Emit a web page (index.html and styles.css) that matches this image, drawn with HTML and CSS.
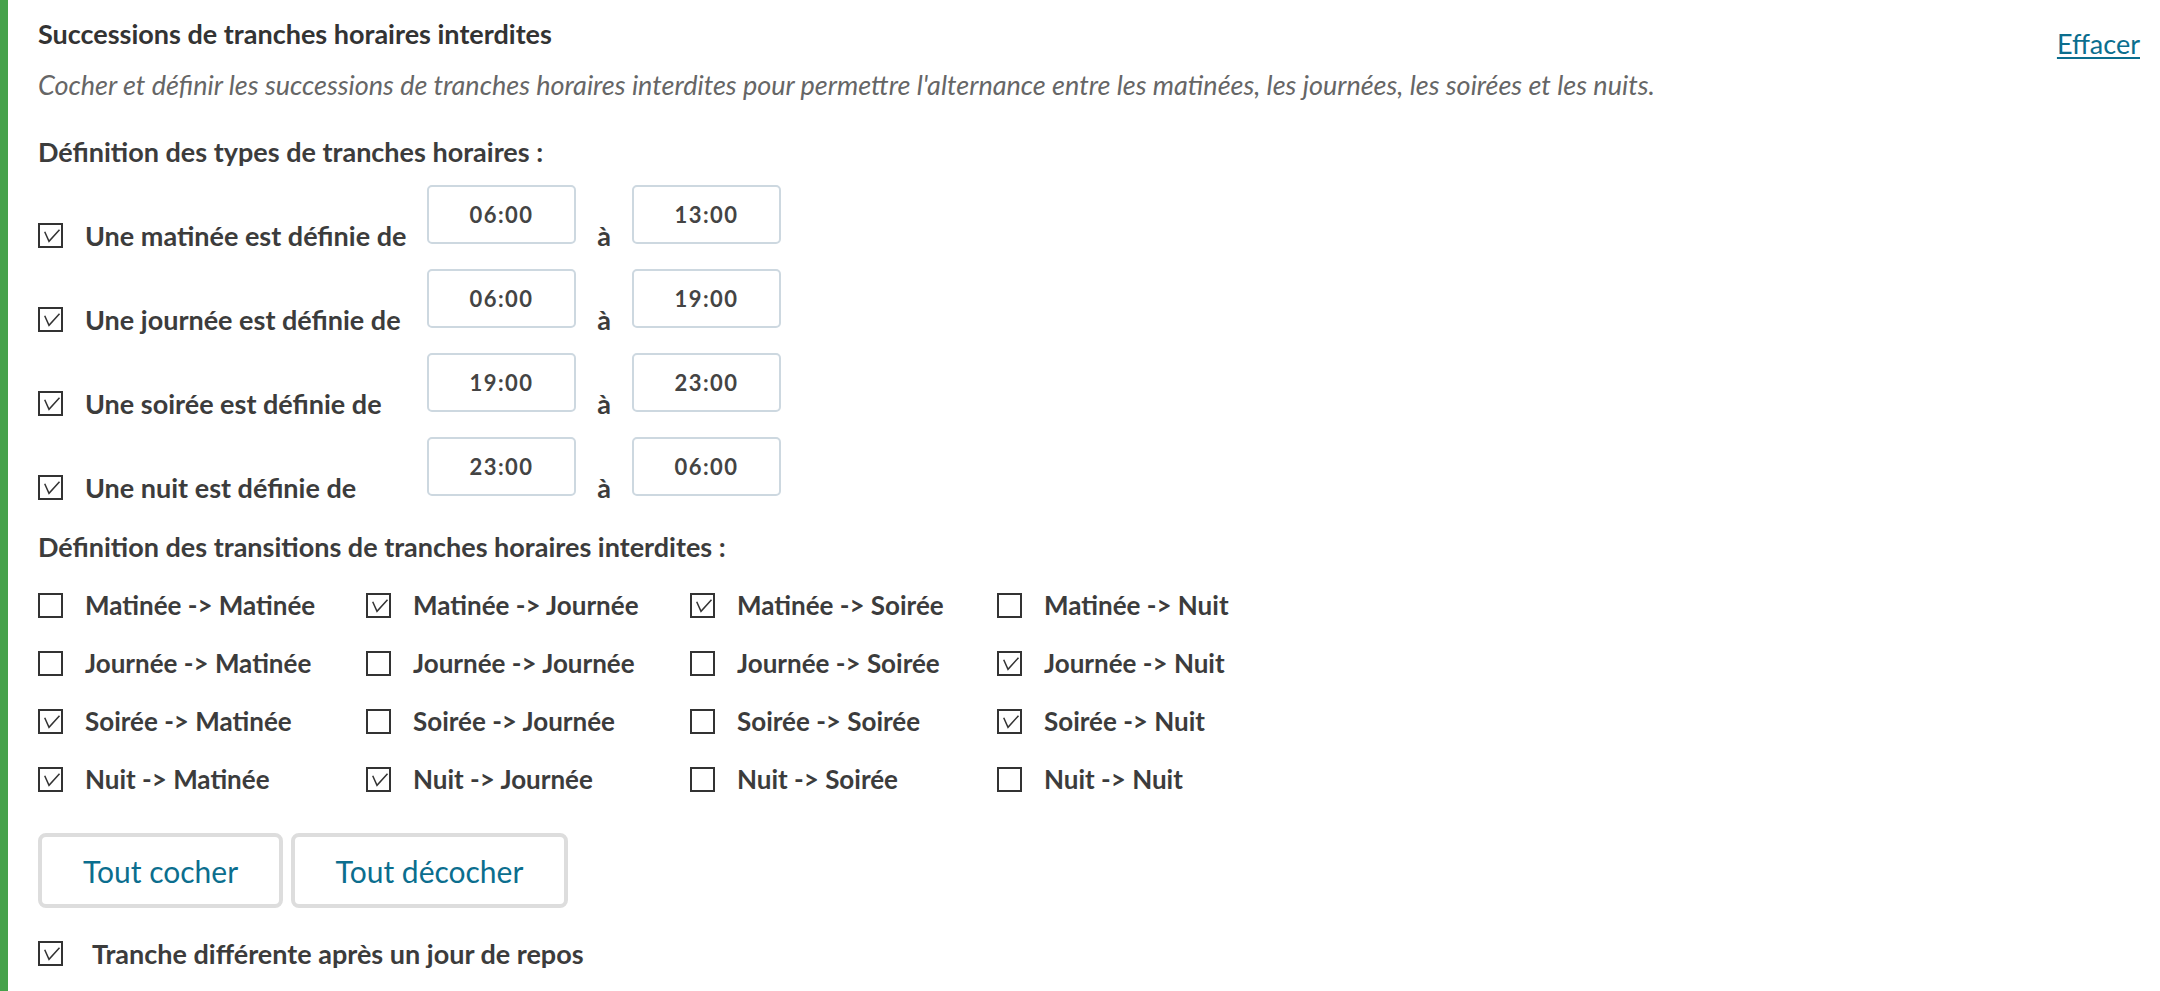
FILE: index.html
```html
<!DOCTYPE html>
<html lang="fr">
<head>
<meta charset="utf-8">
<title>Successions de tranches horaires interdites</title>
<link rel="stylesheet" href="styles.css">
</head>
<body>
<section class="panel">
  <header class="head">
    <div class="head-text">
      <h2 class="title">Successions de tranches horaires interdites</h2>
      <p class="subtitle">Cocher et définir les successions de tranches horaires interdites pour permettre l'alternance entre les matinées, les journées, les soirées et les nuits.</p>
    </div>
    <a class="clear-link" href="#">Effacer</a>
  </header>

  <h3 class="section-title types-title">Définition des types de tranches horaires :</h3>

  <div class="types">
    <div class="type-row">
      <label class="type-label"><span class="cb checked"><svg viewBox="0 0 21 21"><polyline points="4.7,6.8 9,16.3 19.5,4.7"/></svg></span><span>Une matinée est définie de</span></label>
      <div class="time">06:00</div><span class="a">à</span><div class="time">13:00</div>
    </div>
    <div class="type-row">
      <label class="type-label"><span class="cb checked"><svg viewBox="0 0 21 21"><polyline points="4.7,6.8 9,16.3 19.5,4.7"/></svg></span><span>Une journée est définie de</span></label>
      <div class="time">06:00</div><span class="a">à</span><div class="time">19:00</div>
    </div>
    <div class="type-row">
      <label class="type-label"><span class="cb checked"><svg viewBox="0 0 21 21"><polyline points="4.7,6.8 9,16.3 19.5,4.7"/></svg></span><span>Une soirée est définie de</span></label>
      <div class="time">19:00</div><span class="a">à</span><div class="time">23:00</div>
    </div>
    <div class="type-row">
      <label class="type-label"><span class="cb checked"><svg viewBox="0 0 21 21"><polyline points="4.7,6.8 9,16.3 19.5,4.7"/></svg></span><span>Une nuit est définie de</span></label>
      <div class="time">23:00</div><span class="a">à</span><div class="time">06:00</div>
    </div>
  </div>

  <h3 class="section-title trans-title">Définition des transitions de tranches horaires interdites :</h3>

  <div class="grid">
    <label class="opt"><span class="cb"></span><span>Matinée -&gt; Matinée</span></label>
    <label class="opt"><span class="cb checked"><svg viewBox="0 0 21 21"><polyline points="4.7,6.8 9,16.3 19.5,4.7"/></svg></span><span>Matinée -&gt; Journée</span></label>
    <label class="opt"><span class="cb checked"><svg viewBox="0 0 21 21"><polyline points="4.7,6.8 9,16.3 19.5,4.7"/></svg></span><span>Matinée -&gt; Soirée</span></label>
    <label class="opt"><span class="cb"></span><span>Matinée -&gt; Nuit</span></label>

    <label class="opt"><span class="cb"></span><span>Journée -&gt; Matinée</span></label>
    <label class="opt"><span class="cb"></span><span>Journée -&gt; Journée</span></label>
    <label class="opt"><span class="cb"></span><span>Journée -&gt; Soirée</span></label>
    <label class="opt"><span class="cb checked"><svg viewBox="0 0 21 21"><polyline points="4.7,6.8 9,16.3 19.5,4.7"/></svg></span><span>Journée -&gt; Nuit</span></label>

    <label class="opt"><span class="cb checked"><svg viewBox="0 0 21 21"><polyline points="4.7,6.8 9,16.3 19.5,4.7"/></svg></span><span>Soirée -&gt; Matinée</span></label>
    <label class="opt"><span class="cb"></span><span>Soirée -&gt; Journée</span></label>
    <label class="opt"><span class="cb"></span><span>Soirée -&gt; Soirée</span></label>
    <label class="opt"><span class="cb checked"><svg viewBox="0 0 21 21"><polyline points="4.7,6.8 9,16.3 19.5,4.7"/></svg></span><span>Soirée -&gt; Nuit</span></label>

    <label class="opt"><span class="cb checked"><svg viewBox="0 0 21 21"><polyline points="4.7,6.8 9,16.3 19.5,4.7"/></svg></span><span>Nuit -&gt; Matinée</span></label>
    <label class="opt"><span class="cb checked"><svg viewBox="0 0 21 21"><polyline points="4.7,6.8 9,16.3 19.5,4.7"/></svg></span><span>Nuit -&gt; Journée</span></label>
    <label class="opt"><span class="cb"></span><span>Nuit -&gt; Soirée</span></label>
    <label class="opt"><span class="cb"></span><span>Nuit -&gt; Nuit</span></label>
  </div>

  <div class="buttons">
    <button class="btn btn-all">Tout cocher</button>
    <button class="btn btn-none">Tout décocher</button>
  </div>

  <label class="opt rest"><span class="cb checked"><svg viewBox="0 0 21 21"><polyline points="4.7,6.8 9,16.3 19.5,4.7"/></svg></span><span>Tranche différente après un jour de repos</span></label>
</section>
</body>
</html>
```

FILE: styles.css
```css
html, body {
  margin: 0;
  padding: 0;
  background: #ffffff;
}

body {
  font-family: Lato, "Open Sans", sans-serif;
  color: #3c3c3c;
}

.panel {
  border-left: 8px solid #45a24a;
  padding: 0 20px 30px 30px;
  min-height: 991px;
  box-sizing: border-box;
}

.head {
  display: flex;
  justify-content: space-between;
  align-items: flex-start;
}

.title {
  margin: 0;
  padding-top: 19px;
  font-size: 27px;
  line-height: 30px;
  font-weight: 700;
  color: #333333;
}

.subtitle {
  margin: 21px 0 0 0;
  font-size: 27px;
  line-height: 30px;
  font-style: italic;
  color: #666666;
}

.clear-link {
  margin-top: 29px;
  font-size: 27px;
  line-height: 30px;
  color: #0b6e8e;
  text-decoration: underline;
  text-underline-offset: 3px;
}

.section-title {
  margin: 0;
  font-size: 27px;
  line-height: 30px;
  font-weight: 700;
  color: #3c3c3c;
}

.types-title {
  margin-top: 37px;
}

.types {
  display: flex;
  flex-direction: column;
  gap: 21px;
  margin-top: 18px;
}

.type-row {
  display: flex;
  align-items: flex-end;
}

.type-label {
  width: 389px;
  display: flex;
  align-items: center;
  gap: 22px;
  font-size: 27px;
  font-weight: 700;
  line-height: 25px;
}

.cb {
  width: 25px;
  height: 25px;
  flex: 0 0 25px;
  box-sizing: border-box;
  border: 2px solid #333333;
  background: #ffffff;
  display: inline-flex;
}

.cb svg {
  width: 21px;
  height: 21px;
  fill: none;
  stroke: #333333;
  stroke-width: 1.5;
}

.time {
  width: 149px;
  height: 59px;
  box-sizing: border-box;
  border: 2px solid #cdd8e0;
  border-radius: 5px;
  display: flex;
  align-items: center;
  justify-content: center;
  font-size: 22px;
  letter-spacing: 1.5px;
  font-weight: 700;
  color: #444444;
  margin-bottom: 4px;
}

.a {
  width: 56px;
  text-align: center;
  font-size: 27px;
  font-weight: 700;
  line-height: 25px;
}

.trans-title {
  margin-top: 32px;
}

.grid {
  display: grid;
  grid-template-columns: 328px 324px 307px auto;
  row-gap: 33px;
  margin-top: 31px;
}

.opt {
  display: flex;
  align-items: center;
  gap: 22px;
  font-size: 26px;
  font-weight: 700;
  line-height: 25px;
  color: #3c3c3c;
}

.buttons {
  display: flex;
  gap: 8px;
  margin-top: 41px;
}

.btn {
  height: 75px;
  box-sizing: border-box;
  border: 4px solid #dddddd;
  border-radius: 8px;
  background: #ffffff;
  font-family: Lato, "Open Sans", sans-serif;
  font-size: 30px;
  color: #0b6e8e;
  padding: 0;
}

.btn-all { width: 245px; }
.btn-none { width: 277px; }

.rest {
  margin-top: 33px;
  gap: 29px;
  font-size: 27px;
}
```
